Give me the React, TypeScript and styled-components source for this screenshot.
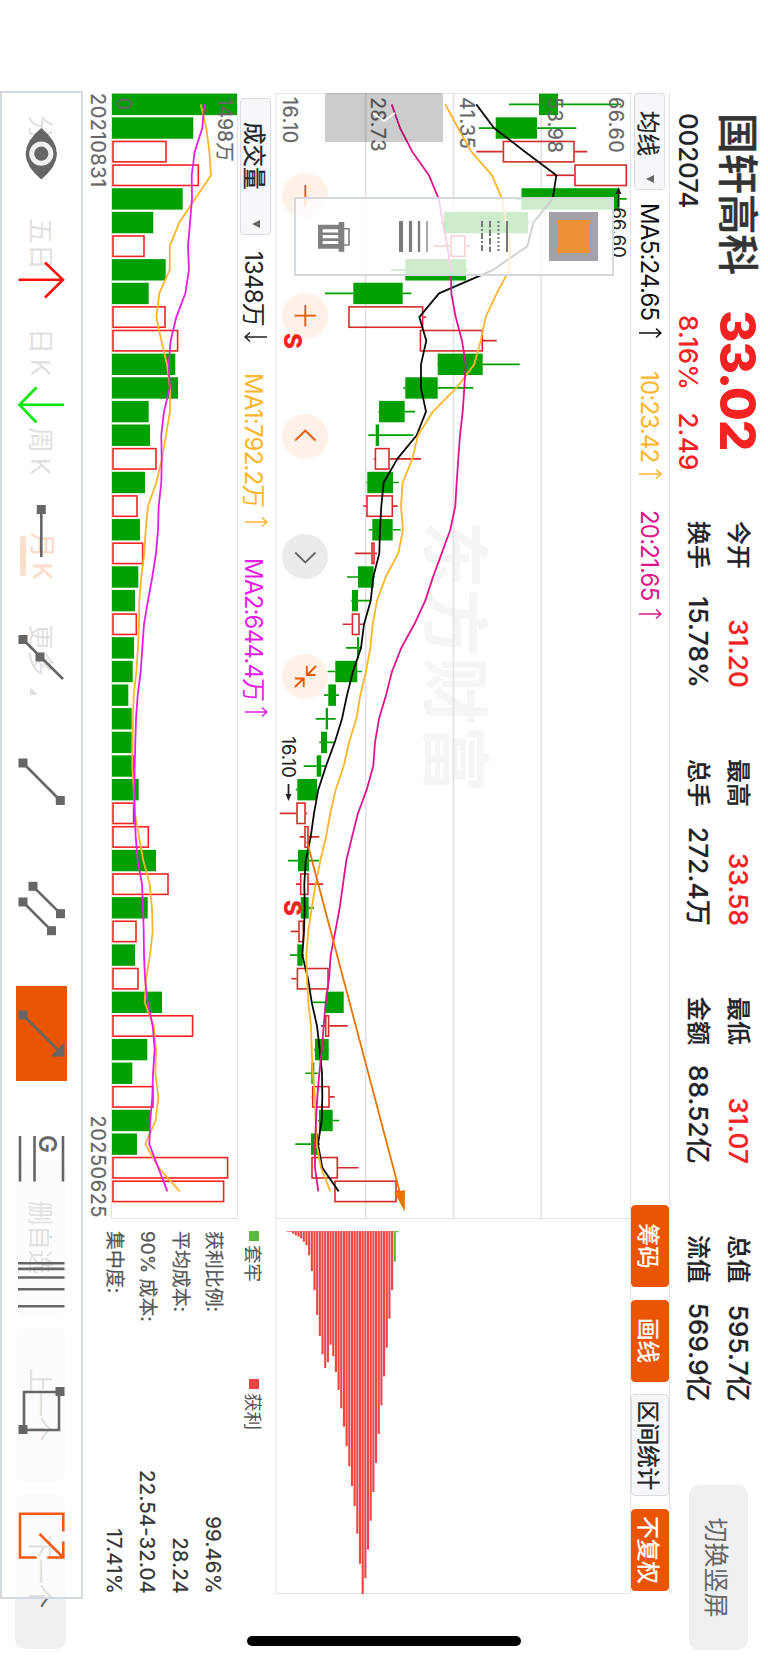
import React from 'react';
import styled, { createGlobalStyle } from 'styled-components';

const colors = {
  text: '#222326',
  subtext: '#666',
  up: '#f42222',
  down: '#00a000',
  candleUp: '#d42c2c',
  accent: '#ea5504',
  border: '#dfe2e8',
  frame: '#d3d9de',
  ma5: '#0a0a0a',
  ma10: '#fdb52b',
  ma20: '#e0148c',
  vol2: '#e61ee6',
};

const fontStack = `Inter, 'Noto Sans CJK SC', sans-serif`;

const GlobalStyle = createGlobalStyle`
  * { box-sizing: border-box; }
  body {
    margin: 0;
    background: #fff;
    overflow: hidden;
  }
`;

// the terminal is laid out in landscape and turned onto the portrait screen
const Viewport = styled.div`
  width: 768px;
  height: 1663px;
  overflow: hidden;
  background: #fff;
`;

const Screen = styled.div`
  position: relative;
  width: 1663px;
  height: 768px;
  transform-origin: 0 0;
  transform: translateX(768px) rotate(90deg);
  font-family: ${fontStack};
  color: ${colors.text};
  white-space: nowrap;
`;

/* header */

const Header = styled.header`
  display: flex;
  height: 98px;
  padding-left: 113px;
`;

const NameBlock = styled.div`
  width: 197px;
`;

const StockName = styled.div`
  height: 61px;
  line-height: 61px;
  font-size: 40.5px;
  font-weight: 500;
  color: #333;
  -webkit-text-stroke: 0.5px #333;
`;

const StockCode = styled.div`
  line-height: 37px;
  font-size: 26px;
  font-weight: 500;
  letter-spacing: -0.2px;
`;

const PriceBlock = styled.div`
  width: 211px;
  color: ${colors.up};
`;

const Price = styled.div`
  height: 61px;
  line-height: 61px;
  font-size: 49.5px;
  font-weight: 800;
  letter-spacing: -1.1px;
`;

const Change = styled.div`
  display: flex;
  gap: 22px;
  padding-left: 5px;
  line-height: 37px;
  font-size: 26px;
  font-weight: 500;
  letter-spacing: 0.2px;
`;

const Quote = styled.div`
  width: 167px;
  margin-right: 71px;
  padding-top: 10px;

  &:last-of-type {
    margin-right: 83px;
  }
`;

const QuoteLine = styled.div`
  display: flex;
  justify-content: space-between;
  height: 40px;
  line-height: 40px;
  font-size: 24px;
  font-weight: 500;
  -webkit-text-stroke: 0.2px;
`;

const QuoteValue = styled.span<{ $up?: boolean }>`
  font-size: 26px;
  letter-spacing: 0.2px;
  color: ${(p) => (p.$up ? colors.up : colors.text)};
`;

const RotateButton = styled.button`
  width: 165px;
  height: 59px;
  margin-top: 20px;
  border: 0;
  border-radius: 10px;
  background: #f0f0f3;
  color: ${colors.subtext};
  font: 400 25px ${fontStack};
`;

/* indicator bars */

const IndicatorBar = styled.div`
  display: flex;
  align-items: center;
  width: 1501px;
  height: 39px;
  margin-left: 93px;
  border-top: 1px solid ${colors.border};
`;

const Dropdown = styled.div<{ $width: number; $pad: number }>`
  display: flex;
  align-items: center;
  justify-content: space-between;
  width: ${(p) => p.$width}px;
  height: 31px;
  padding: 0 6px 0 ${(p) => p.$pad}px;
  border: 1px solid #d9dce1;
  border-radius: 4px;
  background: #f6f7fa;
  font-size: 22.5px;
  -webkit-text-stroke: 0.3px;
`;

const Caret = styled.i`
  border: 4.5px solid transparent;
  border-top: 8px solid ${colors.subtext};
  border-bottom: 0;
`;

const Reading = styled.span<{ $color: string; $left: number; $width: number }>`
  display: flex;
  align-items: center;
  justify-content: space-between;
  width: ${(p) => p.$width}px;
  margin-left: ${(p) => p.$left}px;
  font-size: 24px;
  letter-spacing: -0.8px;
  color: ${(p) => p.$color};
`;

const ActionGroup = styled.div`
  display: flex;
  gap: 12.7px;
  margin-left: auto;
  padding-right: 3px;
`;

const Action = styled.button<{ $plain?: boolean }>`
  width: ${(p) => (p.$plain ? 102 : 82)}px;
  height: 38px;
  padding: 0;
  border: 1px solid ${(p) => (p.$plain ? '#d9dce1' : colors.accent)};
  border-radius: 4px;
  background: ${(p) => (p.$plain ? '#f6f7fa' : colors.accent)};
  color: ${(p) => (p.$plain ? colors.text : '#fff')};
  font: 400 22.5px ${fontStack};
  -webkit-text-stroke: 0.4px;
`;

/* charts */

const Main = styled.main`
  display: flex;
  margin-left: 93px;
`;

const ChartColumn = styled.div`
  width: 1125px;
`;

const SideColumn = styled.div`
  width: 376px;
`;

const Plot = styled.svg`
  display: block;
  font-family: ${fontStack};
  overflow: visible;
`;

const VolumeBar = styled.div`
  display: flex;
  align-items: center;
  height: 38px;
  padding: 2px 0 0 5px;
`;

const Dates = styled.div`
  display: flex;
  justify-content: space-between;
  height: 26px;
  line-height: 26px;
  font-size: 20px;
  letter-spacing: 0.5px;
  color: ${colors.subtext};
  -webkit-text-stroke: 0.2px;
`;

const Legend = styled.div`
  display: flex;
  height: 46px;
  padding: 5px 0 0 13px;
`;

const LegendItem = styled.div<{ $color: string }>`
  display: flex;
  align-items: center;
  gap: 4px;
  width: 148px;
  height: 34px;
  font-size: 18.5px;
  color: #555;

  &:before {
    content: '';
    width: 10px;
    height: 10px;
    background: ${(p) => p.$color};
  }
`;

const Stat = styled.div`
  display: flex;
  justify-content: space-between;
  height: 33px;
  line-height: 33px;
  padding: 0 0 0 13px;
  font-size: 18.9px;
  color: #555;
  -webkit-text-stroke: 0.2px;
`;

const StatValue = styled.span`
  font-size: 20.5px;
  letter-spacing: 0.15px;
  color: #333;
`;

/* period tabs */

const Tabs = styled.nav`
  display: flex;
  align-items: center;
  height: 50px;
  margin-top: 19px;
  padding-left: 115px;
  font-size: 26px;
  color: ${colors.subtext};
`;

const Tab = styled.div<{ $width: number; $active?: boolean }>`
  display: flex;
  align-items: center;
  width: ${(p) => p.$width}px;
  height: 36px;
  padding-bottom: 4px;
  font-weight: ${(p) => (p.$active ? 500 : 400)};
  color: ${(p) => (p.$active ? colors.accent : colors.subtext)};
  word-spacing: -2.5px;
`;

const TabLabel = styled.span`
  display: flex;
  flex-direction: column;
  align-items: center;
  height: 40px;
  margin-bottom: -8px;
  line-height: 33px;

  &:after {
    content: '';
    width: 40px;
    height: 5.5px;
    border-radius: 3px;
    background: ${colors.accent};
  }
`;

const MoreMark = styled.i`
  margin: 18px 0 0 11px;
  border-bottom: 8px solid ${colors.subtext};
  border-left: 8px solid transparent;
`;

const TabButtons = styled.div`
  display: flex;
  gap: 12px;
  margin-left: auto;
  padding-right: 14px;
`;

const TabButton = styled.button`
  width: 155px;
  height: 51px;
  padding: 0 0 2px;
  border: 0;
  border-radius: 10px;
  background: #f0f0f3;
  color: ${colors.subtext};
  font: 400 24.5px ${fontStack};
`;

/* overlays */

const SideTab = styled.div`
  position: absolute;
  left: 93px;
  top: 325px;
  display: flex;
  align-items: center;
  width: 49px;
  height: 118px;
  padding-left: 19px;
  border-radius: 3px 0 0 3px;
  background: rgba(0, 0, 0, 0.2);
`;

// sits under the chart marks
const RoundButtons = styled.div`
  position: absolute;
  z-index: -1;
  left: 173px;
  top: 440.3px;
  display: flex;
  gap: 75px;
`;

const RoundButton = styled.div<{ $muted?: boolean }>`
  width: 45.3px;
  height: 45.3px;
  border-radius: 50%;
  background: ${(p) => (p.$muted ? '#ebebeb' : '#fff0e8')};
  color: ${(p) => (p.$muted ? colors.subtext : colors.accent)};
`;

const StylePanel = styled.div`
  position: absolute;
  left: 197px;
  top: 154px;
  display: flex;
  flex-direction: column;
  width: 79px;
  height: 320px;
  box-shadow: inset 0 0 0 2px ${colors.frame};
  background: rgba(255, 255, 255, 0.8);
`;

const StyleCell = styled.div`
  flex: 1;
  display: flex;
  align-items: center;
  justify-content: center;
`;

const Swatch = styled.div`
  width: 49px;
  height: 49px;
  border: 8px solid #a2a2a8;
  background: #ec9337;
`;

const DrawBar = styled.div`
  position: absolute;
  left: 91px;
  top: 685px;
  display: flex;
  width: 1508px;
  height: 83px;
  box-shadow: inset 0 0 0 2px ${colors.frame};
  background: rgba(255, 255, 255, 0.8);
`;

const DrawCell = styled.div`
  flex: 1;
  display: flex;
  align-items: center;
  justify-content: center;
`;

const ToolBox = styled.div<{ $active?: boolean }>`
  display: flex;
  align-items: center;
  justify-content: center;
  width: 95px;
  height: 51px;
  background: ${(p) => (p.$active ? colors.accent : 'transparent')};
`;

const HomeIndicator = styled.div`
  position: absolute;
  left: 1636px;
  top: 247px;
  width: 10px;
  height: 274px;
  border-radius: 5px;
  background: #000;
`;

/* data */

type Candle = [kind: 'g' | 'r', low: number, from: number, to: number, high: number];

const PRICE_TOP = 631;
const VOLUME_TOP = 238;
const VOLUME_BASE = 112;
const xAt = (i: number) => 11.4 + i * 23.63;

const candles: Candle[] = [
  ['g', 509, 539, 558, 621],
  ['g', 478.7, 495.7, 537, 576.3],
  ['r', 476.3, 502.7, 574.7, 587.3],
  ['r', 546.3, 574.3, 627, 627],
  ['g', 516.3, 521.5, 619.3, 626.7],
  ['g', 441, 444, 528, 529.7],
  ['r', 433.7, 450.3, 465.5, 470],
  ['g', 391, 405.3, 466, 468],
  ['g', 325, 353.3, 402.7, 411.3],
  ['r', 348.3, 348.3, 423.3, 426],
  ['r', 419.5, 419.7, 483, 496.7],
  ['g', 437.3, 437.7, 482.7, 519.7],
  ['g', 403.3, 405.3, 437.7, 473.3],
  ['g', 378.5, 379, 404.7, 415],
  ['g', 368.3, 375.7, 379, 413.3],
  ['r', 373.7, 374.7, 389.7, 421],
  ['g', 366.3, 367.3, 393, 398.7],
  ['r', 363.3, 366.3, 393, 397.7],
  ['g', 368.7, 372.3, 392.7, 400.7],
  ['r', 355, 371.3, 374.7, 377],
  ['g', 347, 358, 373.7, 375],
  ['g', 351.3, 352, 358, 371],
  ['r', 342.7, 351.7, 359.7, 363.3],
  ['g', 346, 357, 359, 362],
  ['g', 327.7, 335.3, 357.3, 362],
  ['g', 324, 328.3, 336, 339],
  ['g', 315.7, 325.7, 328, 335.7],
  ['g', 319.3, 321, 327, 334],
  ['g', 303.7, 316.7, 321.3, 326.7],
  ['g', 295.7, 297.3, 317, 317.7],
  ['r', 279.7, 296.3, 305.7, 307.3],
  ['r', 299.7, 304.3, 308.7, 319.3],
  ['g', 288, 298, 309, 319],
  ['r', 296, 300, 308.7, 323.3],
  ['g', 300, 300.7, 308.7, 314],
  ['r', 290.7, 298.3, 304, 304],
  ['g', 290, 297.3, 302.7, 304],
  ['r', 291.3, 296.7, 328.7, 328.7],
  ['g', 311.7, 325.7, 343.7, 343.7],
  ['r', 321, 325, 329.3, 347.7],
  ['g', 314, 315, 328.7, 329.3],
  ['g', 305.3, 311.3, 314.3, 317.7],
  ['r', 311.7, 312, 329.7, 334.7],
  ['g', 318, 319, 332.7, 339.3],
  ['g', 295.3, 311, 318, 320],
  ['r', 311, 311.3, 338, 358.7],
  ['r', 334.3, 334.3, 396.7, 400],
];

const ma5 = [
  476.3, 494, 525, 556.3, 552.7, 533.3, 527.3, 493.3, 439, 419.3, 426.3, 421, 421, 426, 416.7,
  397.3, 383.7, 381.3, 380, 379.3, 373.3, 370.7, 364, 361, 353, 347, 342, 334.7, 326, 318.3, 314,
  310.7, 305.7, 304.3, 304.7, 304, 302.3, 308, 311.7, 317, 319.7, 322, 322.3, 321.7, 318, 322.3,
  338.7,
];

const ma10 = [
  445.3, 458, 471.3, 492, 502, 506, 510.3, 509.3, 496.7, 485.7, 480.7, 474.3, 456.3, 433, 418,
  412.3, 402.7, 401, 403, 398.3, 385.7, 377, 372.7, 370.3, 366, 360.3, 356.3, 349, 343.7, 335.7,
  330.3, 326, 320.3, 315.7, 311.7, 308.3, 306.3, 307, 308.3, 311, 311.7, 312.7, 315, 315.7, 316.7,
  321, 330.3,
];

const ma20 = [
  391.7, 400, 412.3, 429, 438.7, 442.7, 447.3, 451, 451.3, 455.7, 462, 465.7, 464.3, 462.7, 460,
  458.3, 456.7, 455.3, 450.3, 441.7, 433, 425.3, 414.3, 401.3, 392, 386, 379, 375, 373.3, 366.7,
  358, 352, 346.3, 343, 339.7, 335.3, 330.7, 329, 325.7, 323.7, 321.7, 319.3, 317.3, 316, 315, 315,
  318.3,
];

const volumes = [
  237, 193.3, 166.7, 199, 182.7, 153.3, 144.7, 165.7, 148.7, 165.7, 178.3, 175.3, 178, 148.7, 150,
  156.7, 145, 137.7, 140, 143.3, 138.3, 135, 137, 134, 132.7, 128.3, 131.7, 131.7, 134.3, 138.7,
  134.3, 149, 156, 168.7, 147.7, 136.7, 135, 138.7, 162, 193.3, 147.3, 132.3, 153.7, 150.3, 137,
  228.3, 224.3,
];

const volMa1 = [
  200.7, 206.3, 209.3, 211, 195, 179.3, 169.7, 169.7, 159.3, 156.3, 161.3, 167, 170, 170, 166, 162,
  156.3, 148, 145.7, 144.3, 141.3, 139.3, 139, 138, 136.3, 133.7, 133, 132.7, 132.3, 133.7, 135,
  139, 143.3, 149.7, 152, 152.7, 150, 146, 144.7, 153.7, 156, 155.3, 158.3, 155.7, 145.3, 158.7,
  179.7,
];

const volMa2 = [
  204.3, 202.3, 194.7, 191.7, 192, 190, 188, 189, 185.3, 176.3, 170.7, 168.7, 169.7, 164, 161.3,
  161.7, 161.3, 158.7, 158, 156, 152.3, 148, 144, 142.3, 140.7, 137.7, 136, 135.3, 134.7, 134.3,
  134.7, 135.7, 137.7, 142, 143, 143.7, 144, 145, 147.7, 152.7, 154.7, 153, 152.3, 150.3, 149.3,
  158.3, 167.3,
];

// lengths of the cost distribution, from the lowest price up
const chips = [
  0.7, 1, 2.7, 4.3, 5.7, 7.3, 10.7, 14.3, 24.3, 40, 59.3, 84, 105, 123.3, 137, 131, 113.7, 125.3,
  141, 159, 177.3, 195.7, 215.3, 235.3, 255, 275, 302.7, 332.7, 363, 347.3, 318.7, 289.7, 261,
  232, 203, 174.3, 145.3, 116.7, 87.7, 59, 30.7, 1.3,
];

const quotes = [
  [['今开', '31.20'], ['换手', '15.78%']],
  [['最高', '33.58'], ['总手', '272.4万']],
  [['最低', '31.07'], ['金额', '88.52亿']],
  [['总值', '595.7亿'], ['流值', '569.9亿']],
];

const stats = [
  ['获利比例:', '99.46%'],
  ['平均成本:', '28.24'],
  ['90% 成本:', '22.54-32.04'],
  ['集中度:', '17.41%'],
];

const toPoints = (values: number[], top: number) =>
  values.map((v, i) => `${xAt(i)},${top - v}`).join(' ');

function Trend({ down }: { down?: boolean }) {
  return (
    <svg width="12" height="24" viewBox="0 0 12 24" fill="none" stroke="currentColor" strokeWidth="1.5">
      <path d={down ? 'M6 1V23M1.5 18L6 23L10.5 18' : 'M6 23V1M1.5 6L6 1L10.5 6'} />
    </svg>
  );
}

function PriceChart() {
  return (
    <Plot width={1125} height={355}>
      <text x="428" y="201" fontSize="68" fontWeight="700" fill="#f5f5f6">
        东方财富
      </text>
      <g stroke={colors.border}>
        <path d="M0 0.5H1125M0 355H1125M0.5 0V355" />
        <path d="M0 89.7H1125M0 177.5H1125M0 265.3H1125" strokeWidth="1.6" />
      </g>
      {candles.map(([kind, low, from, to, high], i) => {
        const x = xAt(i);
        const color = kind === 'g' ? colors.down : colors.candleUp;
        return (
          <g key={i} stroke={color} strokeWidth="1.7">
            <path d={`M${x} ${PRICE_TOP - low}V${PRICE_TOP - from}M${x} ${PRICE_TOP - to}V${PRICE_TOP - high}`} />
            {kind === 'g' ? (
              <rect x={x - 10.7} y={PRICE_TOP - to} width="21.4" height={to - from} fill={color} stroke="none" />
            ) : (
              <rect
                x={x - 10.2}
                y={PRICE_TOP - to + 0.7}
                width="20.4"
                height={Math.max(to - from - 1.4, 1)}
                fill="none"
                strokeWidth="1.6"
              />
            )}
          </g>
        );
      })}
      <g fill="#666" fontSize="19.8" letterSpacing="0.5" stroke="#666" strokeWidth="0.2">
        <text x="4" y="22.5">66.60</text>
        <text x="4" y="83.5">53.98</text>
        <text x="4" y="171.5">41.35</text>
        <text x="4" y="260">28.73</text>
        <text x="4" y="348.5">16.10</text>
      </g>
      <g fill="none" strokeWidth="1.8" strokeLinejoin="round">
        <polyline points={toPoints(ma5, PRICE_TOP)} stroke={colors.ma5} />
        <polyline points={toPoints(ma10, PRICE_TOP)} stroke={colors.ma10} />
        <polyline points={toPoints(ma20, PRICE_TOP)} stroke={colors.ma20} />
      </g>
      <g fill="#222" fontSize="18.5" stroke="none">
        <text x="114.5" y="19">66.60</text>
        <path d="M96 12.5H114" stroke="#222" strokeWidth="1.8" />
        <path d="M94 12.5L101 9.5V15.5Z" />
        <text x="643.5" y="349">16.10</text>
        <path d="M691 342.5H703" stroke="#222" strokeWidth="1.8" />
        <path d="M708 342.5L701 339.5V345.5Z" />
      </g>
      <g fill={colors.up} fontSize="24" fontWeight="800">
        <text x="240" y="347">S</text>
        <text x="807" y="347">S</text>
      </g>
      <path d="M748.5 324L1100 231" stroke="#e87500" strokeWidth="1.8" />
      <path d="M1118.7 226.3L1099.3 236.7L1097 226Z" fill="#e87500" />
    </Plot>
  );
}

function VolumeChart() {
  return (
    <Plot width={1125} height={127}>
      <path d="M0.5 0V126.5H1125M0 0.5H1125.5V127" fill="none" stroke={colors.border} />
      {volumes.map((v, i) =>
        candles[i][0] === 'g' ? (
          <rect key={i} x={xAt(i) - 10.7} y={VOLUME_TOP - v} width="21.4" height={v - VOLUME_BASE} fill={colors.down} />
        ) : (
          <rect
            key={i}
            x={xAt(i) - 10.2}
            y={VOLUME_TOP - v + 0.7}
            width="20.4"
            height={v - VOLUME_BASE - 1.7}
            fill="none"
            stroke={colors.up}
            strokeWidth="1.6"
          />
        )
      )}
      <g fill="#666" fontSize="19.5" stroke="#666" strokeWidth="0.2">
        <text x="4.5" y="20.5">1498万</text>
        <text x="4.5" y="121.5">0</text>
      </g>
      <g fill="none" strokeWidth="1.8" strokeLinejoin="round">
        <polyline points={toPoints(volMa1, VOLUME_TOP)} stroke={colors.ma10} />
        <polyline points={toPoints(volMa2, VOLUME_TOP)} stroke={colors.vol2} />
      </g>
    </Plot>
  );
}

function ChipChart() {
  return (
    <Plot width={376} height={355}>
      <path d="M0.5 0V355H375.5V0.5H0" fill="none" stroke={colors.border} />
      {chips.map((length, i) => (
        <rect
          key={i}
          x="13"
          y={PRICE_TOP - 288.8 - i * 2.676}
          width={length}
          height="2.1"
          fill={i > chips.length - 3 ? '#5cb93c' : '#ea4444'}
        />
      ))}
    </Plot>
  );
}

const Node = ({ x, y }: { x: number; y: number }) => (
  <rect x={x - 4.5} y={y - 4.5} width="9" height="9" fill="#666" stroke="none" />
);

function ToolIcon({ children, color = '#666' }: { children: React.ReactNode; color?: string }) {
  return (
    <svg width="52" height="52" viewBox="0 0 52 52" fill="none" stroke={color} strokeWidth="2.6" overflow="visible">
      {children}
    </svg>
  );
}

const tools: { active?: boolean; icon: React.ReactNode }[] = [
  {
    icon: (
      <ToolIcon>
        <path d="M0 25.7Q25.7 -5.5 51.4 25.7Q25.7 57 0 25.7Z" fill="#666" stroke="none" />
        <circle cx="25.7" cy="25.7" r="9.6" stroke="#f1f1f1" strokeWidth="5" />
      </ToolIcon>
    ),
  },
  {
    icon: (
      <ToolIcon color="#ff1010">
        <path d="M25.8 48.5V4M8.5 22L25.8 4L43.5 22" />
      </ToolIcon>
    ),
  },
  {
    icon: (
      <ToolIcon color="#0be60b">
        <path d="M25.8 3V47M8.5 30.5L25.8 47.5L43.5 30.5" />
      </ToolIcon>
    ),
  },
  {
    icon: (
      <ToolIcon>
        <path d="M5 25.7H52" />
        <Node x={4.5} y={25.7} />
      </ToolIcon>
    ),
  },
  {
    icon: (
      <ToolIcon>
        <path d="M8.5 44L48 4" />
        <Node x={8.5} y={44} />
        <Node x={26} y={27} />
      </ToolIcon>
    ),
  },
  {
    icon: (
      <ToolIcon>
        <path d="M7 44L44.5 6.7" />
        <Node x={7} y={44} />
        <Node x={44.5} y={6.7} />
      </ToolIcon>
    ),
  },
  {
    icon: (
      <ToolIcon>
        <path d="M4.3 34L31.7 6.5M20 44L48.7 15.5" />
        <Node x={4.3} y={34} />
        <Node x={31.7} y={6.5} />
        <Node x={20} y={44} />
        <Node x={48.7} y={15.5} />
      </ToolIcon>
    ),
  },
  {
    active: true,
    icon: (
      <ToolIcon>
        <path d="M7 44L44 7" />
        <path d="M34.8 2.7H48.5V16.3Z" fill="#666" stroke="none" />
        <Node x={7} y={44} />
      </ToolIcon>
    ),
  },
  {
    icon: (
      <ToolIcon>
        <path d="M3 47H48.5M3 32.5H48.5M3 4H48.5" />
        <text x="2" y="28" fontSize="24" fontWeight="600" fill="#666" stroke="none">
          G
        </text>
      </ToolIcon>
    ),
  },
  {
    icon: (
      <ToolIcon>
        <path d="M4.2 2.5V49M9.9 2.5V49M18.5 2.5V49M30.2 2.5V49M47.2 2.5V49" />
      </ToolIcon>
    ),
  },
  {
    icon: (
      <ToolIcon>
        <path d="M7 8H45V43H7Z" />
        <Node x={6.5} y={7} />
        <Node x={44.5} y={44} />
      </ToolIcon>
    ),
  },
  {
    icon: (
      <ToolIcon color="#f25a0c">
        <path d="M21.5 3.7H3.8V47H47.5V30.3M31.5 3.7H47.5V19.7M23.8 27.5L47 4.2" />
      </ToolIcon>
    ),
  },
];

const roundIcons: { muted?: boolean; d: string }[] = [
  { d: 'M12 22.7H33.5' },
  { d: 'M12 22.7H33.5M22.7 12V33.5' },
  { d: 'M26.5 12.5L16.5 22.7L26.5 32.8' },
  { muted: true, d: 'M18.5 12.5L28.5 22.7L18.5 32.8' },
  { d: 'M12 12L21 20.8M21 12.5V21.2H12M33 33L24.5 24.5M24.5 33V24.3H33' },
];

function LineStyles() {
  return (
    <svg width="31" height="30" stroke="#777" strokeWidth="2" fill="none">
      <path d="M0 2H31" />
      <path d="M0 10.5H31" strokeDasharray="2 2" />
      <path d="M0 19H31" strokeDasharray="6.5 2" />
      <path d="M0 27H31" strokeDasharray="6 2 2 2" />
    </svg>
  );
}

function LineWidths() {
  return (
    <svg width="31" height="30" stroke="#7c7c7c" fill="none">
      <path d="M0 2H31" strokeWidth="1.3" />
      <path d="M0 10H31" strokeWidth="2.3" />
      <path d="M0 18.5H31" strokeWidth="3.2" />
      <path d="M0 28H31" strokeWidth="4" />
    </svg>
  );
}

function TrashIcon() {
  return (
    <svg width="30" height="32" fill="#808080">
      <path d="M6.7 6V1H23V6" fill="none" stroke="#808080" strokeWidth="1.6" />
      <path d="M0 5.7H29.7V11.3H0Z" />
      <path
        fillRule="evenodd"
        d="M2.7 11H26.7V32H2.7ZM7.3 11.7V27.3H10.4V11.7ZM13.1 11.7V27.3H16.2V11.7ZM18.9 11.7V27.3H22V11.7Z"
      />
    </svg>
  );
}

export default function App() {
  return (
    <Viewport>
      <GlobalStyle />
      <Screen>
        <Header>
          <NameBlock>
            <StockName>国轩高科</StockName>
            <StockCode>002074</StockCode>
          </NameBlock>
          <PriceBlock>
            <Price>33.02</Price>
            <Change>
              <span>8.16%</span>
              <span>2.49</span>
            </Change>
          </PriceBlock>
          {quotes.map((rows) => (
            <Quote key={rows[0][0]}>
              {rows.map(([label, value], i) => (
                <QuoteLine key={label}>
                  <span>{label}</span>
                  <QuoteValue $up={i === 0 && label !== '总值'}>{value}</QuoteValue>
                </QuoteLine>
              ))}
            </Quote>
          ))}
          <RotateButton>切换竖屏</RotateButton>
        </Header>

        <IndicatorBar>
          <Dropdown $width={97} $pad={17}>
            均线
            <Caret />
          </Dropdown>
          <Reading $color="#111" $left={13} $width={136}>
            MA5:24.65 <Trend />
          </Reading>
          <Reading $color={colors.ma10} $left={32} $width={109}>
            10:23.42 <Trend />
          </Reading>
          <Reading $color={colors.ma20} $left={30} $width={110}>
            20:21.65 <Trend />
          </Reading>
          <ActionGroup>
            <Action>筹码</Action>
            <Action>画线</Action>
            <Action $plain>区间统计</Action>
            <Action>不复权</Action>
          </ActionGroup>
        </IndicatorBar>

        <Main>
          <ChartColumn>
            <PriceChart />
            <VolumeBar>
              <Dropdown $width={137} $pad={23}>
                成交量
                <Caret />
              </Dropdown>
              <Reading $color="#222" $left={16} $width={92}>
                1348万 <Trend down />
              </Reading>
              <Reading $color={colors.ma10} $left={30} $width={155}>
                MA1:792.2万 <Trend />
              </Reading>
              <Reading $color={colors.vol2} $left={30} $width={160}>
                MA2:644.4万 <Trend />
              </Reading>
            </VolumeBar>
            <VolumeChart />
            <Dates>
              <span>20210831</span>
              <span>20250625</span>
            </Dates>
          </ChartColumn>

          <SideColumn>
            <ChipChart />
            <Legend>
              <LegendItem $color="#5cb93c">套牢</LegendItem>
              <LegendItem $color="#ea4444">获利</LegendItem>
            </Legend>
            {stats.map(([label, value]) => (
              <Stat key={label}>
                <span>{label}</span>
                <StatValue>{value}</StatValue>
              </Stat>
            ))}
          </SideColumn>
        </Main>

        <Tabs>
          <Tab $width={103}>分时</Tab>
          <Tab $width={110}>五日</Tab>
          <Tab $width={99}>日 K</Tab>
          <Tab $width={105}>周 K</Tab>
          <Tab $width={92} $active>
            <TabLabel>月 K</TabLabel>
          </Tab>
          <Tab $width={80}>
            更多
            <MoreMark />
          </Tab>
          <TabButtons>
            <TabButton>删自选</TabButton>
            <TabButton>上一个</TabButton>
            <TabButton>下一个</TabButton>
          </TabButtons>
        </Tabs>

        {/* Floating controls over the chart */}
        <SideTab>
          <svg width="10" height="24" fill="none" stroke="#fff" strokeWidth="1.8">
            <path d="M1 1L9 12L1 23" />
          </svg>
        </SideTab>
        <RoundButtons>
          {roundIcons.map(({ d, muted }) => (
            <RoundButton key={d} $muted={muted}>
              <svg width="45.3" height="45.3" viewBox="0 0 45.3 45.3" fill="none" stroke="currentColor" strokeWidth="1.8">
                <path d={d} />
              </svg>
            </RoundButton>
          ))}
        </RoundButtons>
        <StylePanel>
          <StyleCell>
            <Swatch />
          </StyleCell>
          <StyleCell>
            <LineStyles />
          </StyleCell>
          <StyleCell>
            <LineWidths />
          </StyleCell>
          <StyleCell>
            <TrashIcon />
          </StyleCell>
        </StylePanel>

        {/* Drawing tools */}
        <DrawBar>
          {tools.map(({ active, icon }, i) => (
            <DrawCell key={i}>
              <ToolBox $active={active}>{icon}</ToolBox>
            </DrawCell>
          ))}
        </DrawBar>
        <HomeIndicator />
      </Screen>
    </Viewport>
  );
}
